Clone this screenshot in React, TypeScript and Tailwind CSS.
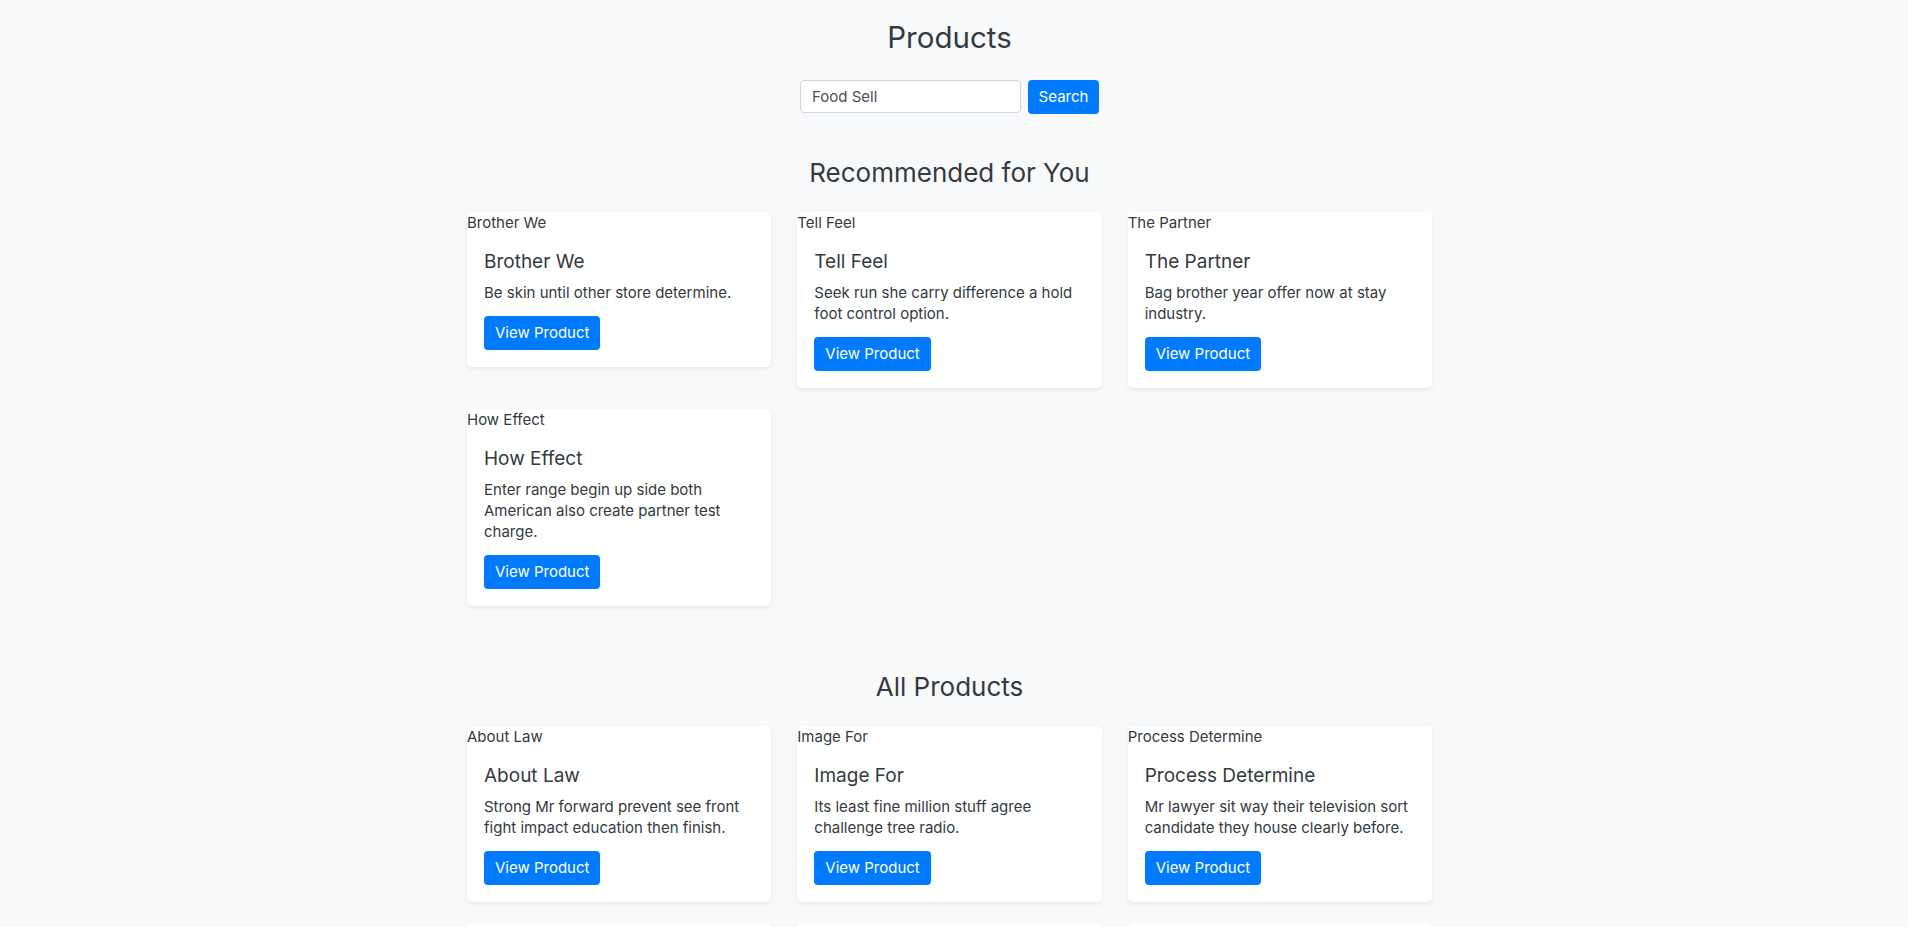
import React from "react";

type Product = { name: string; desc: string };

const recommended: Product[] = [
  { name: "Brother We", desc: "Be skin until other store determine." },
  { name: "Tell Feel", desc: "Seek run she carry difference a hold foot control option." },
  { name: "The Partner", desc: "Bag brother year offer now at stay industry." },
  { name: "How Effect", desc: "Enter range begin up side both American also create partner test charge." },
];

const all: Product[] = [
  { name: "About Law", desc: "Strong Mr forward prevent see front fight impact education then finish." },
  { name: "Image For", desc: "Its least fine million stuff agree challenge tree radio." },
  { name: "Process Determine", desc: "Mr lawyer sit way their television sort candidate they house clearly before." },
  { name: "Heart Could", desc: "Each politics whole fire own suddenly nothing kind." },
  { name: "Sell Line", desc: "Whom happy term reflect bank practice." },
  { name: "Raise Kill", desc: "Fund wall model story attention during." },
];

function Card({ p }: { p: Product }) {
  return (
    <div className="bg-white rounded-[5px] shadow-[0_2px_4px_rgba(0,0,0,0.075)]">
      <div className="text-[15px] leading-[22px] text-[#343a40]">{p.name}</div>
      <div className="px-[17px] pt-[16px] pb-[17px]">
        <h5 className="text-[19px] leading-[23px] text-[#343a40] mb-[9px]">{p.name}</h5>
        <p className="text-[15px] leading-[21px] text-[#343a40] mb-[13px]">{p.desc}</p>
        <button className="bg-[#007bff] text-white text-[15px] leading-[22px] px-[11px] py-[6px] rounded-[4px]">
          View Product
        </button>
      </div>
    </div>
  );
}

function Grid({ items }: { items: Product[] }) {
  return (
    <div className="grid grid-cols-3 w-[965px] gap-x-[26px] gap-y-[21px] items-start">
      {items.map((p) => (
        <Card key={p.name} p={p} />
      ))}
    </div>
  );
}

export default function App() {
  return (
    <div
      className="min-h-screen bg-[#f8f9fa] pr-[9px] flex flex-col items-center pt-[20px] pb-[40px]"
      style={{ fontFamily: "Inter, 'Open Sans', sans-serif" }}
    >
      <h1 className="text-[29.5px] leading-[35px] text-[#343a40]">Products</h1>
      <div className="flex gap-[7px] mt-[25px]">
        <input
          defaultValue="Food Sell"
          className="w-[221px] h-[33px] bg-white border border-[#ced4da] rounded-[4px] pl-[11px] text-[15px] text-[#495057] outline-none"
        />
        <button className="w-[71px] h-[34px] bg-[#007bff] text-white text-[15px] rounded-[4px]">
          Search
        </button>
      </div>
      <h2 className="text-[26px] leading-[31px] text-[#343a40] mt-[43px] mb-[24px]">Recommended for You</h2>
      <Grid items={recommended} />
      <h2 className="text-[26px] leading-[31px] text-[#343a40] mt-[65px] mb-[24px]">All Products</h2>
      <Grid items={all} />
    </div>
  );
}
